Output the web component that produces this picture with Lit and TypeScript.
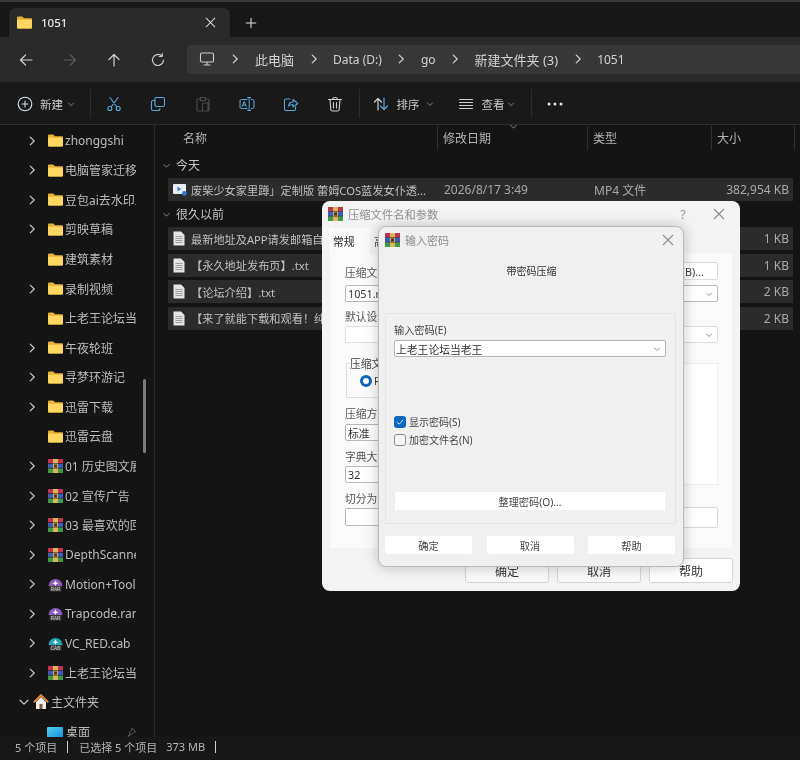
import { LitElement, css, html, svg } from "lit";
import { customElement } from "lit/decorators.js";

const FONT = css`
  :host {
    font-family: "Noto Sans", "Noto Sans CJK SC", sans-serif;
  }
`;

const line = (d: string, color = "#d0d0d0", w = 1.2, size = 16) => html`<svg
  width=${size}
  height=${size}
  viewBox="0 0 16 16"
  fill="none"
  stroke=${color}
  stroke-width=${w}
  stroke-linecap="round"
  stroke-linejoin="round"
>
  ${svg`<path d=${d}></path>`}
</svg>`;

const chevron = (color = "#c8c8c8", w = 1.4) => line("M6 3.5 10.5 8 6 12.5", color, w, 14);
const chevronDown = (color = "#999", size = 8) => line("M3 6 8 11 13 6", color, 1.6, size);

const folder = () => html`<svg width="15" height="13" viewBox="0 0 15 13">
  <path d="M0 1.5Q0 .5 1 .5H5.2L7 2.2H14Q15 2.2 15 3.2V11.5Q15 12.5 14 12.5H1Q0 12.5 0 11.5Z" fill="#e9b13a"></path>
  <path d="M0 3.8H14Q15 3.8 15 4.8V11.5Q15 12.5 14 12.5H1Q0 12.5 0 11.5Z" fill="#fdd760"></path>
</svg>`;

const rar = () => html`<svg width="15" height="14" viewBox="0 0 15 14">
  <rect x="0" y="0" width="15" height="4.6" fill="#c2334e"></rect>
  <rect x="0" y="4.6" width="15" height="4.6" fill="#3c5fc0"></rect>
  <rect x="0" y="9.2" width="15" height="4.8" fill="#3f9a45"></rect>
  <rect x="5" y="0" width="5" height="14" fill="#d9b45b"></rect>
  <rect x="6" y="5.5" width="3" height="3" fill="#4a3520"></rect>
  <path d="M0 4.6H15M0 9.2H15" stroke="#2a1a1a" stroke-width=".6"></path>
</svg>`;

const badge = (color: string, label: string) => html`<svg width="15" height="15" viewBox="0 0 15 15">
  <path d="M.5 9A7 7 0 0 1 14.5 9Z" fill=${color}></path>
  <path d="M7.5 3.2 8.4 5.6 10.8 6.2 8.4 7 7.5 9 6.6 7 4.2 6.2 6.6 5.6Z" fill="#fff"></path>
  <rect x="1.5" y="9" width="12" height="5.5" fill="#3a3a3a"></rect>
  <text x="7.5" y="13.6" font-size="4.6" fill="#d8d8d8" text-anchor="middle" font-family="Liberation Sans">${label}</text>
</svg>`;

const home = () => html`<svg width="16" height="16" viewBox="0 0 16 16">
  <path d="M3 8V15H13V8L8 3Z" fill="#ededed"></path>
  <rect x="6.5" y="10" width="3" height="5" fill="#8a5a3a"></rect>
  <path d="M.8 8.4 8 1.2 15.2 8.4" fill="none" stroke="#e8873a" stroke-width="2"></path>
</svg>`;

const desktop = () => html`<svg width="16" height="11" viewBox="0 0 16 11">
  <defs>
    <linearGradient id="dk" x1="0" y1="0" x2="1" y2="1">
      <stop offset="0" stop-color="#4fd0f2"></stop>
      <stop offset="1" stop-color="#1a8fd8"></stop>
    </linearGradient>
  </defs>
  <rect width="16" height="11" rx="1" fill="url(#dk)"></rect>
</svg>`;

const page = () => html`<svg width="12" height="15" viewBox="0 0 12 15">
  <path d="M.5 .5H8L11.5 4V14.5H.5Z" fill="#e4e4e4"></path>
  <path d="M2.5 5.5H9.5M2.5 7.5H9.5M2.5 9.5H9.5M2.5 11.5H9.5" stroke="#8a8a8a" stroke-width=".8"></path>
</svg>`;

const video = () => html`<svg width="14" height="13" viewBox="0 0 14 13">
  <rect y="1" width="13" height="10" rx="1" fill="#e8eef6"></rect>
  <path d="M4.5 3.6 8.2 6 4.5 8.4Z" fill="#3f78d8"></path>
  <circle cx="11.4" cy="10.4" r="2.4" fill="#2b7de0"></circle>
</svg>`;

const winClose = (color: string, size = 12) => html`<svg width=${size} height=${size} viewBox="0 0 12 12" fill="none" stroke=${color} stroke-width="1.1">
  <path d="M1 1 11 11M11 1 1 11"></path>
</svg>`;

const BLUE = "#5aa8d8";

type TreeRow = { name: string; icon: () => unknown; chev?: boolean };

const TREE: TreeRow[] = [
  { name: "zhonggshi", icon: folder, chev: true },
  { name: "电脑管家迁移文件", icon: folder, chev: true },
  { name: "豆包ai去水印工具", icon: folder, chev: true },
  { name: "剪映草稿", icon: folder, chev: true },
  { name: "建筑素材", icon: folder },
  { name: "录制视频", icon: folder, chev: true },
  { name: "上老王论坛当老王", icon: folder },
  { name: "午夜轮班", icon: folder, chev: true },
  { name: "寻梦环游记", icon: folder, chev: true },
  { name: "迅雷下载", icon: folder, chev: true },
  { name: "迅雷云盘", icon: folder },
  { name: "01 历史图文展览", icon: rar, chev: true },
  { name: "02 宣传广告（合集", icon: rar, chev: true },
  { name: "03 最喜欢的回忆", icon: rar, chev: true },
  { name: "DepthScanner.rar", icon: rar, chev: true },
  { name: "Motion+Tools.rar", icon: () => badge("#8a5bb8", "RAR"), chev: true },
  { name: "Trapcode.rar", icon: () => badge("#8a5bb8", "RAR"), chev: true },
  { name: "VC_RED.cab", icon: () => badge("#1fa8b8", "CAB"), chev: true },
  { name: "上老王论坛当老王", icon: rar, chev: true },
];

const FILES = [
  { name: "最新地址及APP请发邮箱自动获取.txt", size: "1 KB" },
  { name: "【永久地址发布页】.txt", size: "1 KB" },
  { name: "【论坛介绍】.txt", size: "2 KB" },
  { name: "【来了就能下载和观看！纯净版】.txt", size: "2 KB" },
];

@customElement("file-explorer")
class FileExplorer extends LitElement {
  static styles = [
    FONT,
    css`
      :host {
        display: flex;
        flex-direction: column;
        height: 760px;
        background: #141414;
        color: #cfcfcf;
        overflow: hidden;
      }
      .tabs {
        height: 37px;
        flex: none;
        box-sizing: border-box;
        padding: 8px 0 0 9px;
        display: flex;
        align-items: stretch;
        background: #171717;
        border-top: 2px solid #3a3a3a;
      }
      .tab {
        width: 221px;
        box-sizing: border-box;
        padding: 0 14px 0 8px;
        margin-top: -2px;
        background: #2a2a2a;
        border-radius: 7px 7px 0 0;
        display: flex;
        align-items: center;
        gap: 9px;
        font-size: 11.5px;
        font-weight: 500;
        color: #e6e6e6;
      }
      .tab span {
        flex: 1;
      }
      .plus {
        width: 42px;
        display: flex;
        align-items: center;
        justify-content: center;
        margin-top: -2px;
        color: #e0e0e0;
      }
      .nav {
        height: 45px;
        flex: none;
        background: #2a2a2a;
        display: flex;
        align-items: center;
        padding-left: 18px;
        box-sizing: border-box;
      }
      .nav-btns {
        display: flex;
        gap: 28px;
        width: 169px;
        flex: none;
      }
      .address {
        flex: 1;
        height: 29px;
        margin-top: -1px;
        background: #373737;
        border-radius: 4px 0 0 4px;
        display: flex;
        align-items: center;
        padding-left: 12px;
        font-size: 13px;
        color: #d2d2d2;
      }
      .address svg {
        flex: none;
      }
      .address .latin {
        font-size: 12px;
      }
      .crumb-sep {
        display: flex;
        margin: 0 12.5px;
      }
      .crumb-sep.first {
        margin: 0 13px;
      }
      .commands {
        height: 43px;
        flex: none;
        box-sizing: border-box;
        background: #191919;
        border-bottom: 1px solid #2e2e2e;
        display: flex;
        align-items: center;
        padding: 1px 0 0 17px;
        font-size: 11.5px;
        color: #c8c8c8;
      }
      .cmd {
        display: flex;
        align-items: center;
      }
      .new {
        width: 50px;
        gap: 7px;
      }
      .down {
        display: flex;
      }
      .sep {
        width: 1px;
        height: 29px;
        background: #2c2c2c;
        flex: none;
      }
      .icons {
        display: flex;
        gap: 28.3px;
        margin: 0 16px 0 15px;
      }
      .sort-cmd {
        margin-left: 13px;
        gap: 7px;
      }
      .view-cmd {
        margin-left: 24px;
        gap: 7px;
      }
      .view-cmd .down {
        margin-left: -4px;
        margin-right: 16px;
      }
      .more {
        margin-left: 15px;
      }
      .body {
        flex: 1;
        min-height: 0;
        display: flex;
      }
      .side {
        width: 154px;
        flex: none;
        box-sizing: content-box;
        padding-top: 1px;
        border-right: 1px solid #2a2a2a;
        position: relative;
        overflow: hidden;
        font-size: 12px;
        color: #bcbcbc;
      }
      .thumb {
        position: absolute;
        left: 143px;
        top: 254px;
        width: 3px;
        height: 74px;
        background: #7a7a7a;
        border-radius: 2px;
      }
      .tree-row {
        height: 29.57px;
        display: flex;
        align-items: center;
        padding-left: 25px;
      }
      .tree-row .chev {
        width: 14px;
        height: 14px;
        display: flex;
        flex: none;
      }
      .tree-row .ico {
        width: 16px;
        margin-left: 9px;
        display: flex;
        flex: none;
        justify-content: flex-start;
      }
      .tree-row .txt {
        width: 71px;
        margin-left: 1px;
        overflow: hidden;
        white-space: nowrap;
      }
      .tree-row.home {
        padding-left: 17px;
      }
      .tree-row.home .ico {
        margin-left: 2px;
      }
      .tree-row.home .txt {
        margin-left: 2px;
        width: 60px;
      }
      .tree-row.desk {
        padding-left: 47px;
      }
      .tree-row.desk .ico {
        margin: 0;
      }
      .tree-row.desk .txt {
        margin-left: 3px;
        width: 60px;
        flex: none;
      }
      .pin {
        display: flex;
      }
      .list {
        flex: 1;
        min-width: 0;
        font-size: 12px;
      }
      .cols {
        height: 25px;
        box-sizing: border-box;
        padding-top: 1px;
        display: grid;
        grid-template-columns: 283px 150px 124px 83px;
        align-items: stretch;
        color: #b4b4b4;
        position: relative;
      }
      .cols div {
        padding-left: 5px;
        border-right: 1px solid #2e2e2e;
        display: flex;
        align-items: center;
      }
      .cols div:first-child {
        padding-left: 28px;
      }
      .sort {
        position: absolute;
        left: 354px;
        top: -3px;
        display: flex;
      }
      .group {
        height: 16px;
        margin-top: 5px;
        padding-left: 7px;
        display: flex;
        align-items: center;
        gap: 5px;
        color: #c4c4c4;
      }
      .group.first {
        margin-top: 7px;
      }
      .rows {
        margin: 5px 7px 0 13px;
        display: flex;
        flex-direction: column;
        gap: 3.5px;
      }
      .file {
        height: 23px;
        display: grid;
        grid-template-columns: 270px 150px 124px 81px;
        align-items: center;
        background: #2b2b2b;
        color: #c0c0c0;
      }
      .file .name {
        display: flex;
        align-items: center;
        gap: 6px;
        padding-left: 5px;
        white-space: nowrap;
        overflow: hidden;
        font-size: 11.2px;
      }
      .file .name.wide-icon {
        gap: 4px;
      }
      .file .name svg {
        flex: none;
      }
      .file .cell {
        padding-left: 6px;
        color: #a8a8a8;
      }
      .file .size {
        text-align: right;
        padding-right: 4px;
        color: #a8a8a8;
      }
      .status {
        height: 23px;
        flex: none;
        box-sizing: border-box;
        padding: 0 0 4px 15px;
        display: flex;
        align-items: center;
        font-size: 11px;
        color: #b4b4b4;
        background: #171717;
      }
      .status i {
        width: 1px;
        height: 12px;
        background: #d0d0d0;
        margin: 0 11px 0 10px;
      }
      .status .gap {
        margin-left: 9px;
      }
    `,
  ];

  private crumb() {
    return html`<span class="crumb-sep">${chevron("#d0d0d0")}</span>`;
  }

  private fileRow(icon: unknown, name: string, date: string, type: string, size: string, wide = false) {
    return html`<div class="file">
      <div class="name ${wide ? "wide-icon" : ""}">${icon}<span>${name}</span></div>
      <div class="cell">${date}</div>
      <div class="cell">${type}</div>
      <div class="size">${size}</div>
    </div>`;
  }

  render() {
    return html`
      <div class="tabs">
        <div class="tab">
          ${folder()}<span>1051</span>${winClose("#d8d8d8", 11)}
        </div>
        <div class="plus">${line("M8 2.5V13.5M2.5 8H13.5", "#e0e0e0", 1.2, 14)}</div>
      </div>
      <div class="nav">
        <div class="nav-btns">
          ${line("M14 8H2.5M7.5 3 2.5 8 7.5 13")}
          ${line("M2 8H13.5M8.5 3 13.5 8 8.5 13", "#5c5c5c")}
          ${line("M8 14V2.5M3 7.5 8 2.5 13 7.5")}
          ${line("M13.5 8A5.5 5.5 0 1 1 11.8 4M12.2 1.5V4.5H9.2")}
        </div>
        <div class="address">
          ${line("M3 2H13Q14.5 2 14.5 3.5V9.5Q14.5 11 13 11H3Q1.5 11 1.5 9.5V3.5Q1.5 2 3 2ZM8 11V14M5 14H11", "#cfcfcf", 1.1)}
          <span class="crumb-sep first">${chevron("#d0d0d0")}</span>
          <span>此电脑</span>${this.crumb()} <span class="latin">Data (D:)</span>${this.crumb()}
          <span class="latin">go</span>${this.crumb()} <span>新建文件夹 (3)</span>${this.crumb()}
          <span class="latin">1051</span>
        </div>
      </div>
      <div class="commands">
        <div class="cmd new">
          ${line("M8 1.2A6.8 6.8 0 1 0 8 14.8A6.8 6.8 0 1 0 8 1.2ZM8 5V11M5 8H11", "#cfe4f2", 1.1)}
          <span>新建</span>
        </div>
        <span class="down" style="margin-right:15px">${chevronDown()}</span>
        <span class="sep"></span>
        <div class="icons">
          ${line("M4 1.5 10.5 10.5M12 1.5 5.5 10.5M3.8 10.5A2 2 0 1 0 3.8 14.5A2 2 0 1 0 3.8 10.5ZM12.2 10.5A2 2 0 1 0 12.2 14.5A2 2 0 1 0 12.2 10.5Z", BLUE, 1.1)}
          ${line("M6.5 1.5H13Q14.5 1.5 14.5 3V9Q14.5 10.5 13 10.5H6.5Q5 10.5 5 9V3Q5 1.5 6.5 1.5ZM5 4.5H3Q1.5 4.5 1.5 6V13Q1.5 14.5 3 14.5H8Q10 14.5 10 12.5", BLUE, 1.1)}
          ${line("M5 3H3Q2 3 2 4V14Q2 15 3 15H13Q14 15 14 14V4Q14 3 13 3H11M5.5 1.5H10.5V4.5H5.5ZM7.5 7H13V15H7.5Z", "#4a4a4a", 1.1)}
          ${line("M8 3.5H2.5Q1 3.5 1 5V11Q1 12.5 2.5 12.5H8M12.5 3.5H13.5Q15 3.5 15 5V11Q15 12.5 13.5 12.5H12.5M10.2 1.5V14.5M8.7 1.5H11.7M8.7 14.5H11.7M3.2 10.5 5.2 5.5 7.2 10.5M4 9H6.4", BLUE, 1)}
          ${line("M7 3H3Q1.5 3 1.5 4.5V13Q1.5 14.5 3 14.5H11Q12.5 14.5 12.5 13V11M5.5 10Q6 6 10 6V3.5L14.8 7.5 10 11V8.5Q7.5 8.5 5.5 10Z", BLUE, 1.1)}
          ${line("M1.5 3.5H14.5M5.5 3.5Q5.5 1.5 8 1.5T10.5 3.5M3 3.5 3.8 13.5Q4 15 5.5 15H10.5Q12 15 12.2 13.5L13 3.5M6.5 6.5V12M9.5 6.5V12", "#cfcfcf", 1.1)}
        </div>
        <span class="sep"></span>
        <div class="cmd sort-cmd">
          <svg width="16" height="16" viewBox="0 0 16 16" fill="none" stroke-width="1.2" stroke-linecap="round" stroke-linejoin="round">
            <path d="M5 14V2.5M1.5 6 5 2.5 8.5 6" stroke="#d0d0d0"></path>
            <path d="M11 2V13.5M7.5 10 11 13.5 14.5 10" stroke=${BLUE}></path>
          </svg>
          <span>排序</span>
          <span class="down">${chevronDown()}</span>
        </div>
        <div class="cmd view-cmd">
          ${line("M1.5 3.5H14.5M1.5 6.5H14.5M1.5 9.5H14.5M1.5 12.5H14.5", "#cfcfcf", 1)}
          <span>查看</span>
          <span class="down">${chevronDown()}</span>
        </div>
        <span class="sep"></span>
        <svg class="more" width="16" height="4" viewBox="0 0 16 4" fill="#e4e4e4">
          <circle cx="2" cy="2" r="1.5"></circle><circle cx="8" cy="2" r="1.5"></circle><circle cx="14" cy="2" r="1.5"></circle>
        </svg>
      </div>
      <div class="body">
        <div class="side">
          ${TREE.map(
            (r) => html`<div class="tree-row">
              <span class="chev">${r.chev ? chevron() : ""}</span>
              <span class="ico">${r.icon()}</span>
              <span class="txt">${r.name}</span>
            </div>`,
          )}
          <div class="tree-row home">
            <span class="chev">${line("M3.5 6 8 10.5 12.5 6", "#c8c8c8", 1.4, 14)}</span>
            <span class="ico">${home()}</span>
            <span class="txt">主文件夹</span>
          </div>
          <div class="tree-row desk">
            <span class="ico">${desktop()}</span>
            <span class="txt">桌面</span>
            <span class="pin">${line("M9 2 14 7 11 8 8 11 7 10 3 14 6 9 5 8 8 5Z", "#7c7c7c", 1, 11)}</span>
          </div>
          <div class="thumb"></div>
        </div>
        <div class="list">
          <div class="cols">
            <div>名称</div>
            <div>修改日期</div>
            <div>类型</div>
            <div>大小</div>
            <span class="sort">${chevronDown("#8a8a8a", 9)}</span>
          </div>
          <div class="group first">${chevronDown("#8a8a8a", 9)}<span>今天</span></div>
          <div class="rows">
            ${this.fileRow(video(), "废柴少女家里蹲」定制版 蕾姆COS蓝发女仆透...", "2026/8/17 3:49", "MP4 文件", "382,954 KB", true)}
          </div>
          <div class="group">${chevronDown("#8a8a8a", 9)}<span>很久以前</span></div>
          <div class="rows">
            ${FILES.map((f) => this.fileRow(page(), f.name, "", "", f.size))}
          </div>
        </div>
      </div>
      <div class="status">
        <span>5 个项目</span><i></i><span>已选择 5 个项目</span><span class="gap">373 MB</span><i></i>
      </div>
    `;
  }
}

@customElement("archive-dialog")
class ArchiveDialog extends LitElement {
  static styles = [
    FONT,
    css`
      :host {
        display: flex;
        flex-direction: column;
        box-sizing: border-box;
        width: 418px;
        height: 390px;
        background: #f3f3f3;
        border-radius: 8px;
        font-size: 10.8px;
        color: #3c3c3c;
        overflow: hidden;
      }
      .title {
        height: 26px;
        flex: none;
        display: flex;
        align-items: center;
        padding: 0 15px 0 6px;
        gap: 5px;
        font-size: 11.3px;
        color: #8f8f8f;
      }
      .title .t {
        flex: 1;
      }
      .q {
        font-size: 13px;
        color: #9a9a9a;
        margin-right: 22px;
      }
      .strip {
        height: 27px;
        flex: none;
        padding-left: 7px;
        display: flex;
        align-items: flex-end;
      }
      .tab {
        height: 26px;
        width: 41px;
        box-sizing: border-box;
        padding-left: 4px;
        display: flex;
        align-items: center;
        color: #444;
      }
      .tab.on {
        background: #fafafa;
        color: #222;
      }
      .panel {
        height: 294px;
        flex: none;
        margin: 0 8px 0 8px;
        background: #fafafa;
        box-sizing: border-box;
        padding: 8px 14px 0 15px;
      }
      .row {
        display: flex;
        justify-content: space-between;
        align-items: flex-end;
      }
      .btn {
        height: 18px;
        width: 120px;
        background: #fff;
        border: 1px solid #dcdcdc;
        border-radius: 2px;
        box-sizing: border-box;
        display: flex;
        align-items: center;
        justify-content: flex-end;
        padding-right: 13px;
      }
      .box {
        height: 17px;
        box-sizing: border-box;
        border: 1px solid #b8b8b8;
        background: #fff;
        border-radius: 2px;
        display: flex;
        align-items: center;
        padding: 0 2px;
        color: #333;
      }
      .box.combo {
        justify-content: space-between;
        padding-right: 4px;
      }
      .box.soft {
        border-color: #dedede;
      }
      .lab {
        height: 14px;
        line-height: 14px;
        color: #555;
      }
      .m2 {
        margin-top: 2px;
      }
      .m3 {
        margin-top: 3px;
      }
      .m5 {
        margin-top: 5px;
      }
      .m8 {
        margin-top: 8px;
      }
      .m9 {
        margin-top: 9px;
      }
      .tall {
        height: 18px;
      }
      .split {
        display: grid;
        grid-template-columns: 190px 1fr;
        margin-top: 20px;
      }
      .fmt {
        height: 35px;
        margin-left: 1px;
        border: 1px solid #dedede;
        box-sizing: border-box;
        position: relative;
      }
      .fmt .legend {
        position: absolute;
        left: 3px;
        top: -7px;
        background: #fafafa;
        color: #444;
        line-height: 14px;
      }
      .radio {
        position: absolute;
        left: 13px;
        top: 11px;
        width: 12px;
        height: 12px;
        box-sizing: border-box;
        border-radius: 50%;
        border: 3.5px solid #0f67c0;
        background: #fff;
      }
      .fmt .opt {
        position: absolute;
        left: 27px;
        top: 10px;
        line-height: 14px;
      }
      .stack {
        display: flex;
        flex-direction: column;
      }
      .right {
        display: flex;
        flex-direction: column;
      }
      .paper {
        height: 122px;
        background: #fff;
        border: 1px solid #eeeeee;
        box-sizing: border-box;
      }
      .wide {
        height: 19px;
        margin-top: 22px;
        border: 1px solid #d8d8d8;
        border-radius: 2px;
        background: #fff;
      }
      .foot {
        display: flex;
        justify-content: flex-end;
        gap: 8px;
        padding: 10px 7px 0 0;
      }
      .foot div {
        width: 84px;
        height: 25px;
        box-sizing: border-box;
        border: 1px solid #d4d4d4;
        border-radius: 3px;
        background: #f8f8f8;
        display: flex;
        align-items: center;
        justify-content: center;
        font-size: 12px;
        color: #333;
      }
      .foot .last {
        background: #fff;
      }
    `,
  ];

  render() {
    return html`
      <div class="title">
        ${rar()}<span class="t">压缩文件名和参数</span><span class="q">?</span>${winClose("#8f8f8f")}
      </div>
      <div class="strip">
        <div class="tab on">常规</div>
        <div class="tab">高级</div>
      </div>
      <div class="panel">
        <div class="row">
          <span class="lab">压缩文件名(A)</span>
          <div class="btn">浏览(B)...</div>
        </div>
        <div class="box combo m5">
          <span>1051.rar</span>${chevronDown("#777", 8)}
        </div>
        <div class="lab m8">默认设置</div>
        <div class="box combo soft m2">
          <span></span>${chevronDown("#777", 8)}
        </div>
        <div class="split">
          <div class="stack">
            <div class="fmt">
              <span class="legend">压缩文件格式</span>
              <i class="radio"></i>
              <span class="opt">RAR</span>
            </div>
            <div class="lab m9">压缩方式</div>
            <div class="box m3">标准</div>
            <div class="lab m9">字典大小</div>
            <div class="box m2">32</div>
            <div class="lab m9">切分为分卷</div>
            <div class="box m2 tall"></div>
          </div>
          <div class="right">
            <div class="paper"></div>
            <div class="wide"></div>
          </div>
        </div>
      </div>
      <div class="foot">
        <div>确定</div>
        <div>取消</div>
        <div class="last">帮助</div>
      </div>
    `;
  }
}

@customElement("password-dialog")
class PasswordDialog extends LitElement {
  static styles = [
    FONT,
    css`
      :host {
        display: flex;
        flex-direction: column;
        box-sizing: border-box;
        width: 306px;
        height: 341px;
        background: #f0f0f0;
        border: 1.5px solid #b9b9b9;
        border-radius: 8px;
        box-shadow: 0 0 14px rgba(0, 0, 0, 0.22);
        font-size: 10.2px;
        color: #444;
      }
      .title {
        height: 26px;
        flex: none;
        display: flex;
        align-items: center;
        padding: 0 9px 0 6px;
        gap: 5px;
        font-size: 11px;
        color: #8d8d8d;
      }
      .title span {
        flex: 1;
      }
      .msg {
        margin-top: 11px;
        text-align: center;
        font-size: 10px;
        line-height: 14px;
        color: #333;
        padding-left: 1px;
      }
      .group {
        width: 291px;
        height: 211px;
        flex: none;
        margin: 35px 0 0 6px;
        box-sizing: border-box;
        border: 1px solid #e4e4e4;
        padding: 9px 8px 0 8px;
        display: flex;
        flex-direction: column;
      }
      .lab {
        line-height: 14px;
      }
      .combo {
        height: 17px;
        margin-top: 3px;
        width: 272px;
        box-sizing: border-box;
        border: 1px solid #b4b4b4;
        border-radius: 2px;
        background: #fff;
        display: flex;
        align-items: center;
        justify-content: space-between;
        padding: 0 4px 0 1px;
        color: #333;
        font-size: 10.8px;
      }
      .checks {
        margin-top: 58px;
        display: flex;
        flex-direction: column;
        gap: 5px;
        font-size: 10px;
      }
      .check {
        display: flex;
        align-items: center;
        gap: 3px;
        height: 13px;
      }
      .mark {
        width: 12px;
        height: 12px;
        box-sizing: border-box;
        border-radius: 3px;
        border: 1px solid #8a8a8a;
        background: #f6f6f6;
        display: flex;
        align-items: center;
        justify-content: center;
      }
      .mark.on {
        border: none;
        background: #0f67c0;
      }
      .manage {
        width: 270px;
        height: 18px;
        margin: 46px 0 0 1px;
        background: #fff;
        display: flex;
        align-items: center;
        justify-content: center;
        color: #444;
      }
      .foot {
        display: flex;
        justify-content: space-between;
        padding: 12px 8px 0 6px;
      }
      .foot div {
        width: 87px;
        height: 18px;
        border-radius: 2px;
        background: #fff;
        display: flex;
        align-items: center;
        justify-content: center;
        color: #444;
      }
    `,
  ];

  render() {
    return html`
      <div class="title">
        ${rar()}<span>输入密码</span>${winClose("#8d8d8d")}
      </div>
      <div class="msg">带密码压缩</div>
      <div class="group">
        <div class="lab">输入密码(E)</div>
        <div class="combo"><span>上老王论坛当老王</span>${chevronDown("#777", 8)}</div>
        <div class="checks">
          <label class="check">
            <span class="mark on">${line("M3.5 8.5 6.8 11.5 12.5 5", "#e8f2fb", 1.4, 10)}</span>
            <span>显示密码(S)</span>
          </label>
          <label class="check"><span class="mark"></span><span>加密文件名(N)</span></label>
        </div>
        <div class="manage">整理密码(O)...</div>
      </div>
      <div class="foot">
        <div>确定</div>
        <div>取消</div>
        <div>帮助</div>
      </div>
    `;
  }
}

@customElement("app-root")
class AppRoot extends LitElement {
  static styles = css`
    :host {
      display: block;
      position: relative;
      width: 800px;
      height: 760px;
      overflow: hidden;
      filter: blur(0.35px);
    }
    .back {
      position: absolute;
      left: 322px;
      top: 201px;
    }
    .front {
      position: absolute;
      left: 378px;
      top: 226px;
    }
  `;

  render() {
    return html`
      <file-explorer></file-explorer>
      <archive-dialog class="back"></archive-dialog>
      <password-dialog class="front"></password-dialog>
    `;
  }
}

export { FileExplorer, ArchiveDialog, PasswordDialog, AppRoot };
